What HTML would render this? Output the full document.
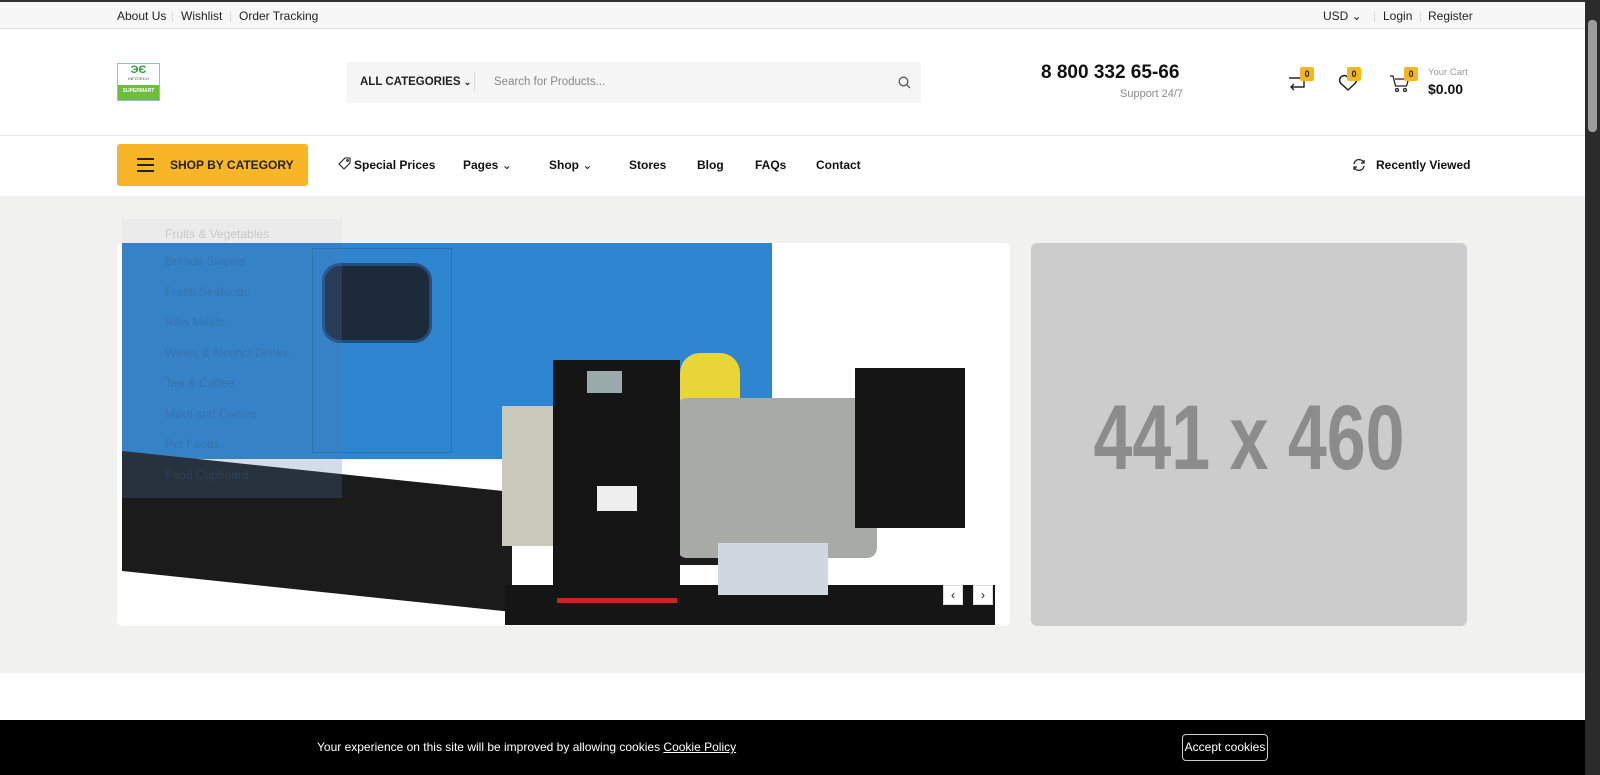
<!DOCTYPE html>
<html><head><meta charset="utf-8"><style>
*{margin:0;padding:0;box-sizing:border-box}
body{width:1600px;height:775px;overflow:hidden;font-family:"Liberation Sans",sans-serif;color:#111;background:#fff;position:relative}
.abs{position:absolute}
.top{left:0;top:0;width:1585px;height:29px;background:#f7f7f7;border-top:2px solid #333;border-bottom:1px solid #e2e2e2;font-size:12px;color:#222}
.top span{position:absolute;top:7px}
.sep{position:absolute;top:9px;width:1px;height:11px;background:#ddd}
.nav{font-size:12.5px;font-weight:bold;top:158px}
.badge{width:14px;height:14px;background:#f6b624;font-size:9px;font-weight:bold;text-align:center;line-height:14px;border-radius:2px;color:#222}
</style></head><body>
<div class="abs top">
<span style="left:117px">About Us</span><div class="sep" style="left:172px"></div>
<span style="left:181px">Wishlist</span><div class="sep" style="left:230px"></div>
<span style="left:239px">Order Tracking</span>
<span style="left:1323px">USD &#8964;</span><div class="sep" style="left:1374px"></div>
<span style="left:1383px">Login</span><div class="sep" style="left:1420px"></div>
<span style="left:1428px">Register</span>
</div>
<div class="abs" style="left:117px;top:63px;width:43px;height:38px;border:1px solid #9bc;background:#fff">
<div style="font-size:11px;color:#2a9a3a;font-weight:bold;text-align:center;line-height:12px">ЭЄ</div>
<div style="font-size:4px;text-align:center;color:#444">INFOTECH</div>
<div style="position:absolute;bottom:0;left:0;right:0;height:15px;background:#6cbf3a;color:#fff;font-size:5px;font-weight:bold;text-align:center;line-height:12px">SUPERMART</div>
</div>
<div class="abs" style="left:347px;top:62px;width:574px;height:41px;background:#f5f5f5">
<div class="abs" style="left:13px;top:14px;font-size:11.5px;font-weight:bold;color:#222">ALL CATEGORIES <span style="font-size:9px">&#8964;</span></div>
<div class="abs" style="left:127px;top:10px;width:1px;height:20px;background:#ddd"></div>
<div class="abs" style="left:147px;top:14px;font-size:11.5px;color:#888">Search for Products...</div>
<svg class="abs" style="left:551px;top:14px" width="13" height="13" viewBox="0 0 13 13" fill="none" stroke="#555" stroke-width="1.3"><circle cx="5.5" cy="5.5" r="4.3"/><path d="M8.7 8.7L12 12"/></svg>
</div>
<div class="abs" style="left:1041px;top:62px;font-size:19px;font-weight:bold">8 800 332 65-66</div>
<div class="abs" style="left:1120px;top:88px;font-size:11px;color:#888">Support 24/7</div>
<svg class="abs" style="left:1288px;top:74px" width="20" height="20" viewBox="0 0 20 20" fill="none" stroke="#222" stroke-width="1.4"><path d="M1 4h15v9H4M6 10l-3 3 3 3"/></svg>
<div class="abs badge" style="left:1300px;top:67px">0</div>
<svg class="abs" style="left:1338px;top:74px" width="20" height="18" viewBox="0 0 20 18" fill="none" stroke="#222" stroke-width="1.5"><path d="M10 16L2.5 9A4 4 0 0 1 10 3.5 4 4 0 0 1 17.5 9Z"/></svg>
<div class="abs badge" style="left:1347px;top:67px">0</div>
<svg class="abs" style="left:1390px;top:74px" width="20" height="19" viewBox="0 0 20 19" fill="none" stroke="#222" stroke-width="1.3"><path d="M0 2h3l2.5 10h11l2-7H5"/><circle cx="7" cy="16" r="1.5"/><circle cx="15" cy="16" r="1.5"/></svg>
<div class="abs badge" style="left:1404px;top:67px">0</div>
<div class="abs" style="left:1428px;top:67px;font-size:9.5px;color:#999">Your Cart</div>
<div class="abs" style="left:1428px;top:81px;font-size:14px;font-weight:bold">$0.00</div>
<div class="abs" style="left:0;top:135px;width:1585px;height:1px;background:#e3e3e3"></div>
<div class="abs" style="left:117px;top:144px;width:191px;height:42px;background:#f9b528;border-radius:3px">
<div class="abs" style="left:20px;top:14px;width:17px;height:2px;background:#222;box-shadow:0 6px 0 #222,0 12px 0 #222"></div>
<div class="abs" style="left:53px;top:14px;font-size:12px;font-weight:bold;color:#222">SHOP BY CATEGORY</div>
</div>
<svg class="abs" style="left:338px;top:157px" width="13" height="13" viewBox="0 0 13 13" fill="none" stroke="#222" stroke-width="1.1"><path d="M7 1h5v5l-6 6-5-5z"/><circle cx="9.5" cy="3.5" r="0.8"/></svg>
<div class="abs nav" style="left:354px;font-size:12px">Special Prices</div>
<div class="abs nav" style="left:463px;font-size:12px">Pages <span style="font-weight:normal">&#8964;</span></div>
<div class="abs nav" style="left:549px;font-size:12px">Shop <span style="font-weight:normal">&#8964;</span></div>
<div class="abs nav" style="left:629px;font-size:12px">Stores</div>
<div class="abs nav" style="left:697px;font-size:12px">Blog</div>
<div class="abs nav" style="left:755px;font-size:12px">FAQs</div>
<div class="abs nav" style="left:816px;font-size:12px">Contact</div>
<svg class="abs" style="left:1352px;top:158px" width="14" height="14" viewBox="0 0 14 14" fill="none" stroke="#222" stroke-width="1.3"><path d="M2 6a5 5 0 0 1 9.5-1.5M12 8a5 5 0 0 1-9.5 1.5"/><path d="M12 2v3h-3M2 12V9h3"/></svg>
<div class="abs nav" style="left:1376px;font-size:12px">Recently Viewed</div>
<div class="abs" style="left:0;top:196px;width:1585px;height:477px;background:#f1f1f0"></div>
<div class="abs" style="left:122px;top:219px;width:220px;height:24px;background:rgba(230,230,230,.5)"></div>
<div class="abs" style="left:117px;top:243px;width:893px;height:383px;background:#fff;border-radius:6px;overflow:hidden">
 <div class="abs" style="left:5px;top:0;width:650px;height:216px;background:#2d86cf"></div>
 <div class="abs" style="left:195px;top:5px;width:140px;height:205px;border:1px solid #2470b3"></div>
 <div class="abs" style="left:205px;top:20px;width:110px;height:80px;background:#1d2a3a;border-radius:18px;border:3px solid #204d80"></div>
 <div class="abs" style="left:5px;top:208px;width:390px;height:120px;background:#1b1b1b;transform:skewY(6deg);transform-origin:0 0"></div>
 <div class="abs" style="left:5px;top:0;width:220px;height:255px;background:rgba(80,120,170,.25)"></div>
 <div class="abs" style="left:388px;top:342px;width:490px;height:40px;background:#151515"></div>
 <div class="abs" style="left:548px;top:172px;width:95px;height:150px;background:#1c1c1c"></div>
 <div class="abs" style="left:563px;top:110px;width:60px;height:80px;background:#e9d43a;border-radius:20px"></div>
 <div class="abs" style="left:560px;top:155px;width:200px;height:160px;background:#a8aaa6;border-radius:10px"></div>
 <div class="abs" style="left:738px;top:125px;width:110px;height:160px;background:#151515"></div>
 <div class="abs" style="left:385px;top:163px;width:60px;height:140px;background:#c8c9b8"></div>
 <div class="abs" style="left:436px;top:117px;width:127px;height:265px;background:#151515"></div>
 <div class="abs" style="left:440px;top:355px;width:120px;height:5px;background:#c22"></div>
 <div class="abs" style="left:470px;top:128px;width:35px;height:22px;background:#9aa"></div>
 <div class="abs" style="left:480px;top:243px;width:40px;height:25px;background:#eee"></div>
 <div class="abs" style="left:601px;top:300px;width:110px;height:52px;background:#cfd8e0"></div>
 <div class="abs" style="left:48px;top:3px;color:rgba(60,90,130,.35);font-size:12px;line-height:30.5px">Breads Sweets<br>Fresh Seafoods<br>Raw Meats<br>Wines &amp; Alcohol Drinks<br>Tea &amp; Coffee<br>Milks and Dairies<br>Pet Foods<br>Food Cupboard</div>
 <div class="abs" style="left:826px;top:342px;width:20px;height:20px;background:#fff;border:1px solid #ddd;font-size:12px;text-align:center;line-height:18px">&#8249;</div>
 <div class="abs" style="left:856px;top:342px;width:20px;height:20px;background:#fff;border:1px solid #ddd;font-size:12px;text-align:center;line-height:18px">&#8250;</div>
</div>
<div class="abs" style="left:165px;top:227px;color:rgba(120,120,120,.3);font-size:12px">Fruits &amp; Vegetables</div>
<div class="abs" style="left:1031px;top:243px;width:436px;height:383px;background:#cccccc;border-radius:6px">
<div class="abs" style="left:0;width:436px;top:195px;text-align:center;font-weight:bold;font-size:92px;line-height:92px;color:#8c8c8c;transform:translateY(-50%) scaleX(0.76)">441 x 460</div>
</div>
<div class="abs" style="left:0;top:720px;width:1585px;height:55px;background:#000;color:#fff;font-size:12px">
<div class="abs" style="left:317px;top:20px">Your experience on this site will be improved by allowing cookies <u>Cookie Policy</u></div>
<div class="abs" style="left:1182px;top:14px;width:86px;height:27px;border:1px solid #ccc;border-radius:4px;text-align:center;line-height:25px">Accept cookies</div>
</div>
<div class="abs" style="left:1585px;top:0;width:15px;height:775px;background:#2b2b2b">
<div class="abs" style="left:3px;top:20px;width:9px;height:112px;background:#9d9d9d;border-radius:4px"></div>
</div>
</body></html>
